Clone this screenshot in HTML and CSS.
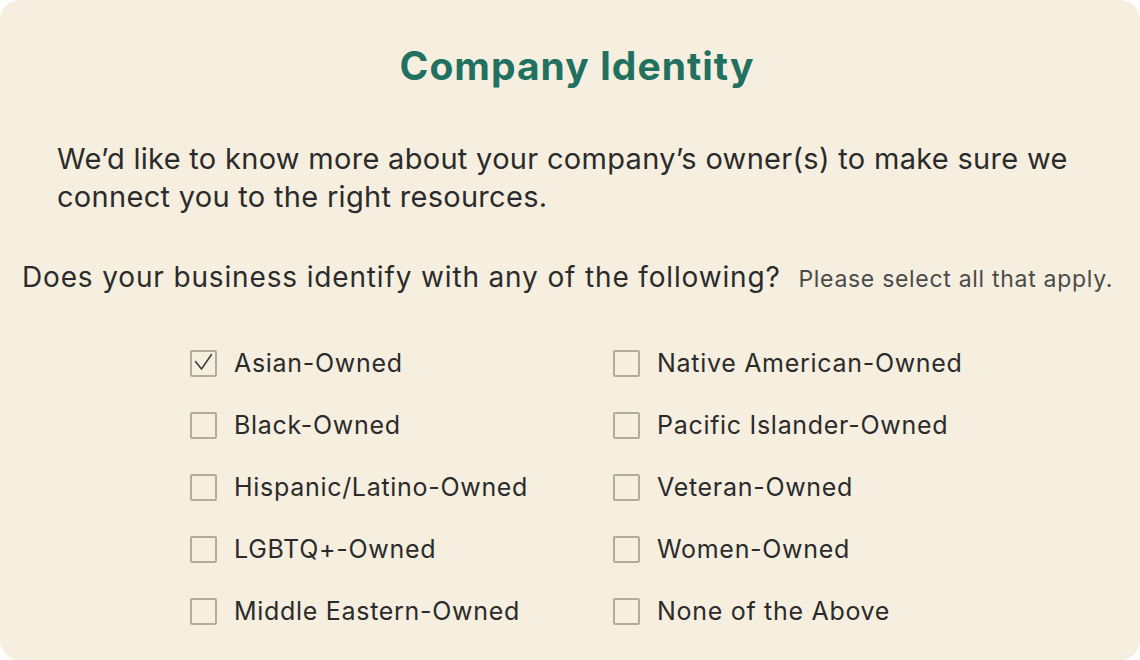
FILE: index.html
```html
<!DOCTYPE html>
<html lang="en">
<head>
<meta charset="utf-8">
<title>Company Identity</title>
<link rel="stylesheet" href="styles.css">
</head>
<body>
<main class="panel">
  <h1 class="title">Company Identity</h1>
  <p class="intro">We’d like to know more about your company’s owner(s) to make sure we connect you to the right resources.</p>
  <p class="question">Does your business identify with any of the following? <span class="hint">Please select all that apply.</span></p>
  <div class="options">
    <label class="opt"><span class="box checked"><svg viewBox="0 0 23 23" width="23" height="23"><path d="M3.5 9.5 L9.5 17 L19.5 2.5" fill="none" stroke="#3a3a3a" stroke-width="1.5" stroke-linecap="round" stroke-linejoin="round"/></svg></span>Asian-Owned</label>
    <label class="opt"><span class="box"></span>Native American-Owned</label>
    <label class="opt"><span class="box"></span>Black-Owned</label>
    <label class="opt"><span class="box"></span>Pacific Islander-Owned</label>
    <label class="opt"><span class="box"></span>Hispanic/Latino-Owned</label>
    <label class="opt"><span class="box"></span>Veteran-Owned</label>
    <label class="opt"><span class="box"></span>LGBTQ+-Owned</label>
    <label class="opt"><span class="box"></span>Women-Owned</label>
    <label class="opt"><span class="box"></span>Middle Eastern-Owned</label>
    <label class="opt"><span class="box"></span>None of the Above</label>
  </div>
</main>
</body>
</html>
```

FILE: styles.css
```css
html, body {
  margin: 0;
  padding: 0;
  background: #ffffff;
}
body {
  font-family: Inter, "Noto Sans", "Liberation Sans", sans-serif;
  color: #2b2b2b;
}
.panel {
  box-sizing: border-box;
  width: 1140px;
  height: 660px;
  background: #f6efdf;
  border-radius: 20px;
  padding: 40px 22px 0 22px;
}
.title {
  margin: 0;
  padding-left: 14px;
  text-align: center;
  font-size: 39px;
  font-weight: 700;
  letter-spacing: 1px;
  color: #22705f;
  line-height: 52px;
}
.intro {
  margin: 48px 0 0 35px;
  font-size: 29px;
  letter-spacing: 0.3px;
  line-height: 38px;
  max-width: 1040px;
}
.question {
  margin: 42px 0 0 0;
  font-size: 28px;
  letter-spacing: 0.85px;
  line-height: 38px;
}
.hint {
  font-size: 23px;
  letter-spacing: 0.7px;
  color: #4a4a4a;
  margin-left: 9px;
}
.options {
  display: grid;
  grid-template-columns: 423px auto;
  row-gap: 35px;
  margin: 52px 0 0 168px;
}
.opt {
  display: flex;
  align-items: center;
  font-size: 25px;
  letter-spacing: 0.7px;
  line-height: 27px;
  color: #2b2b2b;
}
.box {
  box-sizing: border-box;
  flex: none;
  width: 27px;
  height: 27px;
  border: 2px solid #b3ab9c;
  border-radius: 2px;
  margin-right: 17px;
  display: inline-flex;
  align-items: center;
  justify-content: center;
  background: #f6efdf;
}
.box svg {
  display: block;
}
```
